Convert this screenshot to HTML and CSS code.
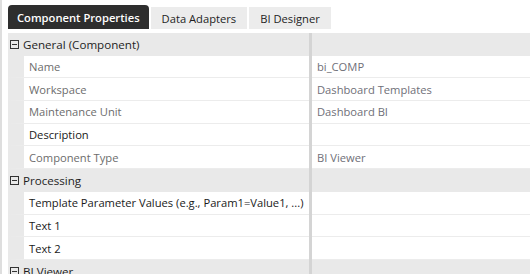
FILE: index.html
```html
<!DOCTYPE html>
<html lang="en">
<head>
    <meta charset="UTF-8">
    <title>Component Properties</title>
    <link rel="stylesheet" href="styles.css">
</head>
<body>
    <div class="frame">
        <div class="tabs">
            <div class="tab active">Component Properties</div>
            <div class="tab">Data Adapters</div>
            <div class="tab">BI Designer</div>
        </div>

        <div class="grid">
            <div class="row group">
                <div class="name"><span class="toggle"></span>General (Component)</div>
                <div class="split"></div>
                <div class="value"></div>
            </div>
            <div class="row prop">
                <div class="name readonly">Name</div>
                <div class="split"></div>
                <div class="value">bi_COMP</div>
            </div>
            <div class="row prop">
                <div class="name readonly">Workspace</div>
                <div class="split"></div>
                <div class="value">Dashboard Templates</div>
            </div>
            <div class="row prop">
                <div class="name readonly">Maintenance Unit</div>
                <div class="split"></div>
                <div class="value">Dashboard BI</div>
            </div>
            <div class="row prop">
                <div class="name">Description</div>
                <div class="split"></div>
                <div class="value"></div>
            </div>
            <div class="row prop">
                <div class="name readonly">Component Type</div>
                <div class="split"></div>
                <div class="value">BI Viewer</div>
            </div>
            <div class="row group">
                <div class="name"><span class="toggle"></span>Processing</div>
                <div class="split"></div>
                <div class="value"></div>
            </div>
            <div class="row prop">
                <div class="name">Template Parameter Values (e.g., Param1=Value1, ...)</div>
                <div class="split"></div>
                <div class="value"></div>
            </div>
            <div class="row prop">
                <div class="name">Text 1</div>
                <div class="split"></div>
                <div class="value"></div>
            </div>
            <div class="row prop">
                <div class="name">Text 2</div>
                <div class="split"></div>
                <div class="value"></div>
            </div>
            <div class="row group">
                <div class="name"><span class="toggle"></span>BI Viewer</div>
                <div class="split"></div>
                <div class="value"></div>
            </div>
        </div>
    </div>
</body>
</html>
```

FILE: styles.css
```css
* { margin: 0; padding: 0; box-sizing: border-box; }
html, body { width: 100%; height: 100%; overflow: hidden; }
body {
    font-family: 'Open Sans', 'Noto Sans', sans-serif;
    font-size: 11.2px;
    color: #222;
    background: #fff;
}
.frame {
    height: 100%;
    border-left: 2px solid #dedede;
    padding-left: 6px;
}

/* tab strip */
.tabs {
    display: flex;
    align-items: flex-end;
    gap: 2px;
    height: 29px;
}
.tab {
    height: 22px;
    padding: 0 11px;
    display: flex;
    align-items: center;
    background-color: #ececec;
    color: #1e1e1e;
    font-size: 11.2px;
}
.tab.active {
    height: 24px;
    padding: 0 9px;
    background-color: #2e2e2e;
    color: #fff;
    font-weight: 600;
    border-radius: 4px 4px 0 0;
}

/* property grid */
.grid { margin-top: 4px; }
.row {
    display: grid;
    grid-template-columns: 301px 3px 1fr;
    height: 22.7px;
}
.row .name, .row .value {
    display: flex;
    align-items: center;
    white-space: nowrap;
    overflow: hidden;
}
.split { background-color: #d4d4d4; }

.group { background-color: #e9e9e9; }
.group .name { padding-left: 2px; color: #1e1e1e; font-size: 11.6px; }
.toggle {
    width: 9px; height: 9px;
    border: 1px solid #333;
    margin-right: 4px;
    position: relative;
    flex-shrink: 0;
}
.toggle::after {
    content: '';
    position: absolute;
    left: 1px; right: 1px; top: 3px;
    height: 1px;
    background: #333;
}

.prop .name {
    border-left: 16px solid #e9e9e9;
    padding-left: 5px;
    color: #1a1a1a;
    border-bottom: 1px solid #ececec;
}
.prop .name.readonly { color: #6d6d6d; }
.prop .value {
    padding-left: 5px;
    color: #6f6f78;
    border-bottom: 1px solid #ececec;
}
```
